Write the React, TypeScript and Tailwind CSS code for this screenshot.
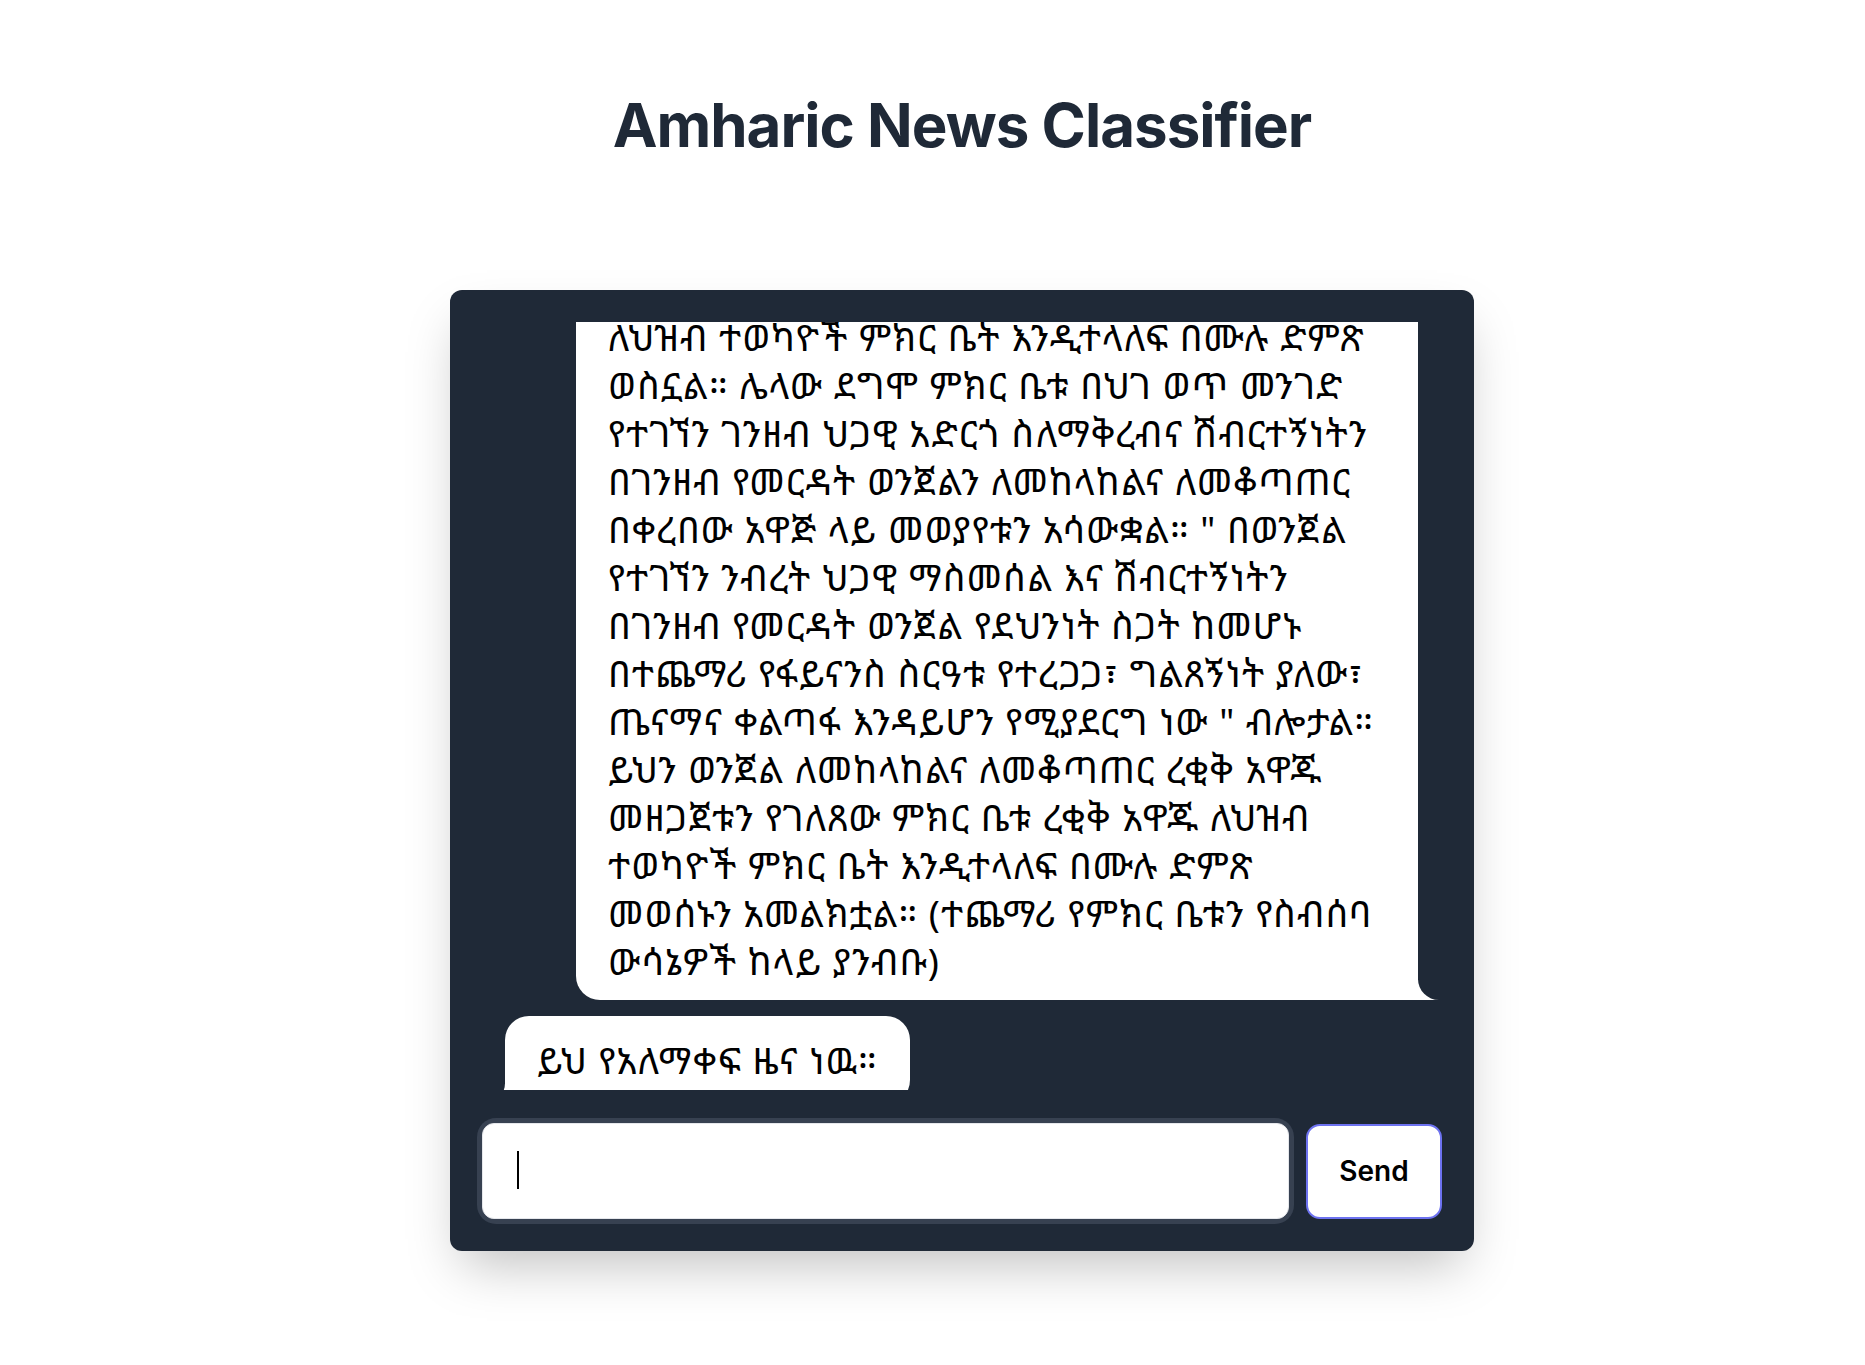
import React from "react";

const lines = [
  "ለህዝብ ተወካዮች ምክር ቤት እንዲተላለፍ በሙሉ ድምጽ",
  "ወስኗል። ሌላው ደግሞ ምክር ቤቱ በህገ ወጥ መንገድ",
  "የተገኘን ገንዘብ ህጋዊ አድርጎ ስለማቅረብና ሽብርተኝነትን",
  "በገንዘብ የመርዳት ወንጀልን ለመከላከልና ለመቆጣጠር",
  "በቀረበው አዋጅ ላይ መወያየቱን አሳውቋል። \" በወንጀል",
  "የተገኘን ንብረት ህጋዊ ማስመሰል እና ሽብርተኝነትን",
  "በገንዘብ የመርዳት ወንጀል የደህንነት ስጋት ከመሆኑ",
  "በተጨማሪ የፋይናንስ ስርዓቱ የተረጋጋ፣ ግልጸኝነት ያለው፣",
  "ጤናማና ቀልጣፋ እንዳይሆን የሚያደርግ ነው \" ብሎታል።",
  "ይህን ወንጀል ለመከላከልና ለመቆጣጠር ረቂቅ አዋጁ",
  "መዘጋጀቱን የገለጸው ምክር ቤቱ ረቂቅ አዋጁ ለህዝብ",
  "ተወካዮች ምክር ቤት እንዲተላለፍ በሙሉ ድምጽ",
  "መወሰኑን አመልክቷል። (ተጨማሪ የምክር ቤቱን የስብሰባ",
  "ውሳኔዎች ከላይ ያንብቡ)",
];

export default function App() {
  return (
    <div className="min-h-screen w-full bg-white font-['Inter',sans-serif]">
      <div className="flex flex-col items-center pl-[59px] pt-[95px] pb-[100px]">
        <h1 className="text-6xl font-bold leading-none text-[#1f2937] tracking-[-1px]">
          Amharic News Classifier
        </h1>
        <div className="mt-[135px] w-[1024px] rounded-xl bg-[#1f2937] p-8 shadow-2xl">
          <div className="flex h-[768px] flex-col overflow-hidden">
            <div className="-mt-[29px] flex flex-col">
              <div className="relative mr-6 self-end">
                <div className="w-[842px] rounded-3xl rounded-br-none bg-white px-8 pt-5 pb-[15px] text-[37px] leading-[48px] tracking-[1px] text-black font-['Noto_Sans_Ethiopic','Noto_Sans',sans-serif]">
                  {lines.map((l, i) => (
                    <div key={i} className="whitespace-nowrap">
                      {l}
                    </div>
                  ))}
                </div>
                <div className="absolute bottom-0 right-[-22px] h-[20px] w-[24px] bg-white" />
                <div className="absolute bottom-0 right-[-24px] h-[22px] w-[24px] rounded-bl-[21px] bg-[#1f2937]" />
              </div>
              <div className="relative ml-[23px] mt-[16px] self-start">
                <div className="rounded-3xl rounded-bl-none bg-white px-8 pt-5 pb-5 text-[37px] leading-[48px] tracking-[1px] text-black font-['Noto_Sans_Ethiopic','Noto_Sans',sans-serif]">
                  <div className="whitespace-nowrap">ይህ የአለማቀፍ ዜና ነዉ።</div>
                </div>
                <div className="absolute bottom-0 left-[-22px] h-[20px] w-[24px] bg-white" />
                <div className="absolute bottom-0 left-[-24px] h-[22px] w-[24px] rounded-br-[21px] bg-[#1f2937]" />
              </div>
            </div>
          </div>
          <div className="mt-[33px] flex items-center gap-[17px]">
            <div className="relative flex-1 rounded-[14px] ring-[5px] ring-[#374151]">
              <input
                autoFocus
                className="block h-[96px] w-full rounded-xl border border-[#e5e7eb] bg-white px-8 text-3xl text-black outline-none font-['Noto_Sans',sans-serif]"
              />
              <div className="pointer-events-none absolute left-[35px] top-[28px] h-[38px] w-[2px] bg-black" />
            </div>
            <button className="h-[95px] w-[136px] rounded-[14px] border-2 border-[#6d72f0] bg-white text-[28px] font-semibold text-black">
              Send
            </button>
          </div>
        </div>
      </div>
    </div>
  );
}
